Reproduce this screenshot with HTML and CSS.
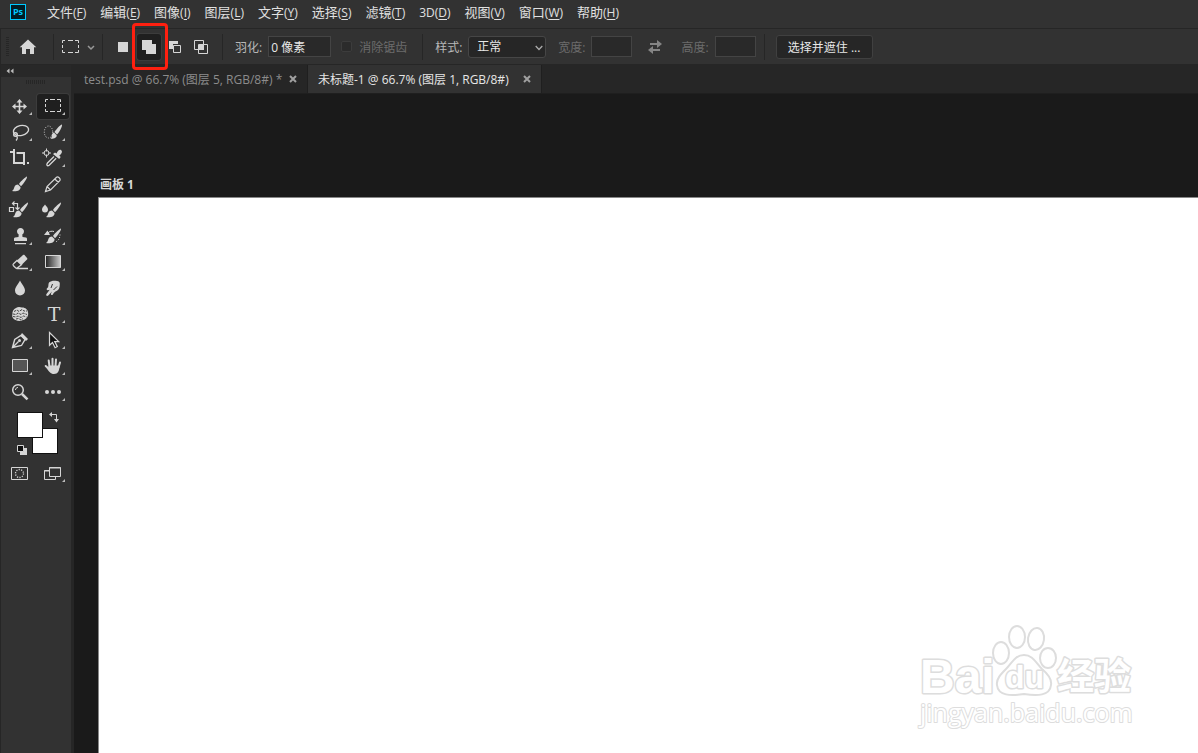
FILE: index.html
```html
<!DOCTYPE html>
<html lang="zh-CN">
<head>
    <meta charset="UTF-8">
    <meta name="viewport" content="width=device-width, initial-scale=1.0">
    <title>未标题-1 @ 66.7%</title>
    <link rel="stylesheet" href="styles.css">
</head>
<body>
    <nav class="menu-bar">
        <svg class="app-logo" width="16" height="16" viewBox="0 0 16 16">
            <rect x="0.5" y="0.5" width="15" height="15" fill="#001d26" stroke="#00c8ff"/>
            <text x="8" y="11" text-anchor="middle">Ps</text>
        </svg>
        <button>文件<small>(<u>F</u>)</small></button>
        <button>编辑<small>(<u>E</u>)</small></button>
        <button>图像<small>(<u>I</u>)</small></button>
        <button>图层<small>(<u>L</u>)</small></button>
        <button>文字<small>(<u>Y</u>)</small></button>
        <button>选择<small>(<u>S</u>)</small></button>
        <button>滤镜<small>(<u>T</u>)</small></button>
        <button><small>3D(<u>D</u>)</small></button>
        <button>视图<small>(<u>V</u>)</small></button>
        <button>窗口<small>(<u>W</u>)</small></button>
        <button>帮助<small>(<u>H</u>)</small></button>
    </nav>

    <div class="options-bar">
        <span class="grip"></span>
        <button class="home" aria-label="主页">
            <svg width="18" height="16" viewBox="0 0 18 16"><path fill="#d6d6d6" d="M9 0.5 17.3 8.3H15V15h-4v-5H7v5H3V8.3H0.7z"/></svg>
        </button>
        <span class="divider"></span>
        <button class="preset" aria-label="矩形选框">
            <svg width="34" height="16" viewBox="0 0 34 16" fill="none">
                <path stroke="#d6d6d6" d="M0.5 4V1.5H3M6 1.5h5M13 1.5h3.5V4M16.5 6v3M16.5 11v2.5H13M11 13.500h-5M3 13.5H0.500V11M0.500 9V6"/>
                <path stroke="#999" stroke-width="1.500" d="M26 7l3 3 3-3"/>
            </svg>
        </button>
        <span class="divider"></span>
        <div class="modes">
            <button aria-label="新选区">
                <svg width="16" height="16" viewBox="0 0 16 16"><path fill="#d6d6d6" d="M3 3h10v10H3z"/></svg>
            </button>
            <button class="active" aria-label="添加到选区">
                <svg width="16" height="16" viewBox="0 0 16 16"><path fill="#d6d6d6" d="M1 1h10v4h4v10H5v-4H1z"/></svg>
                <span class="callout"></span>
            </button>
            <button aria-label="从选区减去">
                <svg width="16" height="16" viewBox="0 0 16 16"><path fill="#d6d6d6" d="M2 2h9v3H6v5H2z"/><path fill="none" stroke="#d6d6d6" d="M6.500 6.500h7v7h-7z"/></svg>
            </button>
            <button aria-label="与选区交叉">
                <svg width="16" height="16" viewBox="0 0 16 16"><path fill="#d6d6d6" d="M6 6h5v5H6z"/><path fill="none" stroke="#d6d6d6" d="M1.500 1.500h9v9h-9zM5.500 5.500h9v9h-9z"/></svg>
            </button>
        </div>
        <span class="divider"></span>
        <label for="feather">羽化:</label>
        <input type="text" id="feather" class="feather" value="0 像素">
        <label class="check disabled"><input type="checkbox" disabled>消除锯齿</label>
        <span class="divider"></span>
        <label for="style">样式:</label>
        <div class="select">
            <select id="style"><option>正常</option></select>
            <svg width="8" height="6" viewBox="0 0 8 6"><path fill="none" stroke="#aaa" stroke-width="1.300" d="M0.700 1 4 4.500 7.300 1"/></svg>
        </div>
        <label class="disabled" for="width">宽度:</label>
        <input type="text" id="width" class="size" disabled>
        <button class="swap" aria-label="交换宽度和高度">
            <svg width="16" height="14" viewBox="0 0 16 14" fill="#858585"><path d="M3 3h7V0l5 4-5 4V5H3zM13 9H6V6L1 10l5 4v-3h7z"/></svg>
        </button>
        <label class="disabled" for="height">高度:</label>
        <input type="text" id="height" class="size" disabled>
        <span class="divider last"></span>
        <button class="select-mask">选择并遮住 ...</button>
    </div>

    <div class="workspace">
        <aside class="tool-panel">
            <button class="collapse" aria-label="折叠">
                <svg width="8" height="6" viewBox="0 0 8 6" fill="#bbb"><path d="M3.500 0.500v5L0.500 3zM7.500 0.500v5L4.500 3z"/></svg>
            </button>
            <span class="panel-grip"></span>
            <div class="tools">
                <button class="more" aria-label="移动">
                    <svg viewBox="0 0 32 25"><path fill="#d6d6d6" d="M15.500 5l3 3.500h-2.200v3.200h3.200V9.500l3.500 3-3.500 3v-2.200h-3.200v3.200h2.200l-3 3.500-3-3.500h2.200v-3.200h-3.200v2.200l-3.500-3 3.500-3v2.200h3.200V8.500h-2.200z"/></svg>
                </button>
                <button class="more active" aria-label="矩形选框">
                    <svg viewBox="0 0 32 25"><path fill="none" stroke="#d6d6d6" d="M8.500 8V5.500H11M13 5.500h5M20 5.500h3.500V8M23.500 10v3M23.500 15v2.500H20M18 17.500h-5M11 17.500H8.500V15M8.500 13v-3"/></svg>
                </button>
                <button class="more" aria-label="套索">
                    <svg viewBox="0 0 32 25" fill="none" stroke="#d6d6d6" stroke-width="1.400"><ellipse cx="17" cy="10.500" rx="7.700" ry="5" transform="rotate(-12 17 10.500)"/><circle cx="11.500" cy="14.500" r="1.800"/><path d="M12.500 16c1.500 1.500.5 3.500-.5 4.500"/></svg>
                </button>
                <button class="more" aria-label="快速选择">
                    <svg viewBox="0 0 32 25"><ellipse cx="11.500" cy="12" rx="4.200" ry="6" fill="none" stroke="#d6d6d6" stroke-dasharray="1 1.500"/><path fill="#d6d6d6" d="M25 4.500c.6 1.800-2.500 7.500-5 10l-2.500-2.500c2-3 5.500-7 7.500-7.500zM17 12.500l2.700 2.700c.3 2.500-2.700 3.800-6.200 3.500 1.500-1.200 1-2.700 1.500-4.200.3-1 1-1.700 2-2z"/></svg>
                </button>
                <button aria-label="裁剪">
                    <svg viewBox="0 0 32 25"><path fill="none" stroke="#d6d6d6" stroke-width="2" d="M10 3V17h11M12.500 7H20v12M6 6h3M23 17h2"/></svg>
                </button>
                <button class="more" aria-label="吸管">
                    <svg viewBox="0 0 32 25"><path fill="none" stroke="#d6d6d6" d="M9.500 2.500v3M9.500 8.500v3M5 7h3M11 7h3"/><circle cx="9.500" cy="7" r="2.500" fill="none" stroke="#d6d6d6"/><path fill="#d6d6d6" d="M16 8l2-1.500 1.500 1c1.200-2.500 3-4.500 4.700-3.300 1.600 1.300.5 3.800-2 5.300l1.500 1.500-1.500 2z"/><path fill="none" stroke="#d6d6d6" stroke-width="1.300" d="M17 10.500l-6.500 6.500c-1.500 2-.3 3.500 1.700 2.300l7-7"/></svg>
                </button>
                <button aria-label="画笔">
                    <svg viewBox="0 0 32 25"><path fill="#d6d6d6" d="M23 4.500c.5 1.700-3.500 7.300-6 9.700L15 12c2-3 6.500-7.200 8-7.500zM14 12.500l2.500 2.500c.5 3.300-4 5-8.500 4 2-1 1.700-2.500 2.500-4.200.7-1.500 2-2.300 3.500-2.300z"/></svg>
                </button>
                <button aria-label="铅笔">
                    <svg viewBox="0 0 32 25" fill="none" stroke="#d6d6d6" stroke-width="1.200"><path d="M8.500 19.500l1.500-5L19.500 5.200c1.500-1 4.500 1.500 3.500 3.300L13.500 18zM10 14.500l3.500 3.500M17.800 7l3.700 3.500"/></svg>
                </button>
                <button aria-label="颜色替换">
                    <svg viewBox="0 0 32 25"><path fill="none" stroke="#d6d6d6" stroke-width="1.200" d="M5.500 9.500h4v4h-4zM8.500 5.500h5V11M10.500 3.500l-2 2 2 2M11.500 9.500l2 2 2-2"/><path fill="#d6d6d6" d="M24 4.500c.5 1.700-3.500 7.300-6 9.700L16 12c2-3 6.500-7.200 8-7.500zM15 12.500l2.500 2.500c.5 3.300-4 5-8.500 4 2-1 1.700-2.500 2.500-4.200.7-1.500 2-2.300 3.500-2.300z"/></svg>
                </button>
                <button aria-label="混合器画笔">
                    <svg viewBox="0 0 32 25"><path fill="#d6d6d6" d="M8 6.500c1.500 2 3 3.300 3 5a3 3 0 01-6 0c0-1.700 1.500-3 3-5zM24 4.500c.5 1.700-3.500 7.300-6 9.700L16 12c2-3 6.500-7.200 8-7.500zM15 12.500l2.500 2.500c.5 3.300-4 5-8.500 4 2-1 1.700-2.500 2.500-4.200.7-1.500 2-2.300 3.500-2.300z"/></svg>
                </button>
                <button class="more" aria-label="仿制图章">
                    <svg viewBox="0 0 32 25"><path fill="#d6d6d6" d="M14.500 13l.2-2.500a3.500 3.500 0 113.600 0l.2 2.500 3.500.5c.7.2 1 .8 1 1.500v2H10v-2c0-.7.3-1.300 1-1.500zM11 19h11v1.200H11z"/></svg>
                </button>
                <button class="more" aria-label="历史记录画笔">
                    <svg viewBox="0 0 32 25"><path fill="#d6d6d6" d="M24 4.500c.5 1.700-3.500 7.300-6 9.700L16 12c2-3 6.500-7.200 8-7.500zM15 12.500l2.500 2.500c.5 3.300-4 5-8.500 4 2-1 1.700-2.500 2.500-4.200.7-1.500 2-2.300 3.500-2.300zM7 11l3.500-4.500L13 11z"/><path fill="none" stroke="#d6d6d6" d="M11 9c1.500-2 4-2 6-1.500"/><path fill="none" stroke="#d6d6d6" stroke-dasharray="1 1.500" d="M23 10.500c0 3-1 6-4.500 7.500"/></svg>
                </button>
                <button class="more" aria-label="橡皮擦">
                    <svg viewBox="0 0 32 25"><path fill="#d6d6d6" d="M13 10.500l6-5.500c.6-.5 1-.5 1.500 0L23 8c.5.6.5 1 0 1.500L17.500 15z"/><path fill="none" stroke="#d6d6d6" stroke-width="1.300" d="M13 10.500l-3.500 3.300c-.8.700-.7 1.200 0 2l2 2c.6.600 1.200.7 2 0l4-3zM12.500 18.500H24"/></svg>
                </button>
                <button class="more" aria-label="渐变">
                    <svg viewBox="0 0 32 25"><defs><linearGradient id="fade"><stop offset="0" stop-color="#222"/><stop offset="1" stop-color="#ccc"/></linearGradient></defs><path fill="url(#fade)" stroke="#d6d6d6" d="M8.500 5.500h15v12h-15z"/></svg>
                </button>
                <button aria-label="模糊">
                    <svg viewBox="0 0 32 25"><path fill="#d6d6d6" d="M16 4.500c1.500 3.500 5 6.500 5 10a5 5 0 01-10 0c0-3.500 3.500-6.500 5-10z"/></svg>
                </button>
                <button aria-label="涂抹">
                    <svg viewBox="0 0 32 25"><path fill="#d6d6d6" d="M12 6.500c2-2 5.500-2 8-1.500 2 .2 3 1.200 2.800 3 0 3.500-.8 6-3.300 7-1.500.8-2.500 1.500-3.500 3.200-.8 1.500-2.500.8-2-.7l1-2-3.700 4c-1.300 1-2.800 0-1.800-1.500l3.200-4.200-1.700.5c-1.500.2-1.800-1.500-.6-2.200 1.500-1.300.6-4 1.600-5.600z"/><path fill="none" stroke="#323232" d="M15.500 8l-1.500 4M20 10.500l-3.500 3.500"/></svg>
                </button>
                <button aria-label="海绵">
                    <svg viewBox="0 0 32 25"><path fill="#d6d6d6" d="M12 6c2-1.500 4.500-.8 6-.5 3-.2 6 2 6 5 1 3-1.500 7-5 7.500-2.500 1.500-5.500 1-7.500 0-2.500-1-4-3.500-3-6-.5-2.500 1-5 3.500-6z"/><path fill="none" stroke="#323232" stroke-width="0.900" stroke-dasharray="2.500 1" d="M10 9.500l3-1.500 2 1.500 3-2 2 1.500 3 0M9 12l3 .5 2-1.500 3 1.500 2-1.500 4 1.500M9 14.500l3 .500 2-1 3 1.500 2.500-1.500 3 1M12 17l2.500-.5 2.500 1.500 2-1.500"/></svg>
                </button>
                <button class="more type-tool" aria-label="文字">T</button>
                <button class="more" aria-label="钢笔">
                    <svg viewBox="0 0 32 25"><path fill="none" stroke="#d6d6d6" stroke-width="1.400" d="M8.500 19.500l2.200-8 6.300-4 4 4-3.500 6zM9 19l5.500-5.500"/><circle cx="15.500" cy="12.500" r="1.500" fill="#d6d6d6"/><path fill="#d6d6d6" d="M18 5l6 6-2 2-5.500-5.500z"/></svg>
                </button>
                <button class="more" aria-label="路径选择">
                    <svg viewBox="0 0 32 25"><path fill="#111" stroke="#d6d6d6" stroke-width="1.200" d="M12.500 4.500v12.800l3-2.800 2.600 5.200 2.200-1.100-2.600-5h4z"/></svg>
                </button>
                <button class="more" aria-label="矩形">
                    <svg viewBox="0 0 32 25"><path fill="#555" stroke="#d6d6d6" d="M8.500 5.500h15v12h-15z"/></svg>
                </button>
                <button class="more" aria-label="抓手">
                    <svg viewBox="0 0 32 25"><path fill="none" stroke="#d6d6d6" stroke-width="2" stroke-linecap="round" d="M12.500 12.500l-.8-6M15.500 12V4.700M18.500 12l.5-6.500M21.500 13.500l1.500-5M12 15l-3.300-3"/><path fill="#d6d6d6" d="M11.500 11.500h11c0 5-1.500 8.500-5.500 8.500-3.500 0-5-2.500-7.500-6l2 .5z"/></svg>
                </button>
                <button aria-label="缩放">
                    <svg viewBox="0 0 32 25" fill="none" stroke="#d6d6d6"><circle cx="14" cy="10" r="5.300" stroke-width="1.500"/><path stroke-width="2.500" d="M18 14l5.500 5.300"/><path d="M11.500 10c0-1.500 1-2.500 2.500-2.500"/></svg>
                </button>
                <button class="more" aria-label="编辑工具栏">
                    <svg viewBox="0 0 32 25" fill="#d6d6d6"><circle cx="10" cy="12" r="2"/><circle cx="16" cy="12" r="2"/><circle cx="22" cy="12" r="2"/></svg>
                </button>
            </div>
            <div class="swatches">
                <button class="swatch background" aria-label="背景色"></button>
                <button class="swatch foreground" aria-label="前景色"></button>
                <button class="swap-colors" aria-label="切换颜色">
                    <svg width="11" height="11" viewBox="0 0 11 11"><path fill="none" stroke="#d6d6d6" d="M2 2.500h5.500V8"/><path fill="#d6d6d6" d="M0 2.500 3 0v5zM5 7h5l-2.500 3.500z"/></svg>
                </button>
                <button class="default-colors" aria-label="默认颜色">
                    <svg width="10" height="10" viewBox="0 0 10 10"><path fill="#d6d6d6" d="M3 3h7v7H3z"/><path fill="#111" stroke="#d6d6d6" d="M0.500 0.500h6v6h-6z"/></svg>
                </button>
            </div>
            <div class="tools view-modes">
                <button aria-label="快速蒙版">
                    <svg viewBox="0 0 32 25" fill="none" stroke="#d6d6d6"><path d="M7.500 6.500h16v12h-16z"/><circle cx="15.500" cy="12.500" r="4" stroke-width="1.300" stroke-dasharray="1.200 1.300"/></svg>
                </button>
                <button class="more" aria-label="屏幕模式">
                    <svg viewBox="0 0 32 25" fill="#323232" stroke="#d6d6d6"><path d="M7.500 9.500h11v9h-11z"/><path d="M12.500 6.500h11v9h-11z"/><path d="M7 10h5M12 7h12"/></svg>
                </button>
            </div>
        </aside>

        <main class="documents">
            <div class="tabs">
                <div class="tab">test.psd @ 66.7% (图层 5, RGB/8#) *
                    <button aria-label="关闭"><svg width="8" height="8" viewBox="0 0 8 8"><path stroke="currentColor" stroke-width="2" d="M1 1l6 6M7 1 1 7"/></svg></button>
                </div>
                <div class="tab current">未标题-1 @ 66.7% (图层 1, RGB/8#)
                    <button aria-label="关闭"><svg width="8" height="8" viewBox="0 0 8 8"><path stroke="currentColor" stroke-width="2" d="M1 1l6 6M7 1 1 7"/></svg></button>
                </div>
            </div>
            <div class="canvas">
                <div class="artboard-name">画板 1</div>
                <div class="artboard">
                    <svg class="watermark" width="224" height="116" viewBox="0 0 224 116">
                        <g fill="#fff" stroke="#ddd" stroke-width="2">
                            <ellipse cx="85" cy="36" rx="8" ry="11"/>
                            <ellipse cx="101" cy="20" rx="8" ry="11"/>
                            <ellipse cx="120" cy="22" rx="8" ry="11" transform="rotate(8 120 22)"/>
                            <ellipse cx="132" cy="41" rx="8" ry="10"/>
                            <path d="M108 38c9 0 12 8 18 14 6 5 10 10 9 16-1 11-14 11-27 9-13 2-26 2-27-9-1-6 4-11 9-16 6-6 9-14 18-14z"/>
                        </g>
                        <text class="mark-name" x="4" y="76">Bai</text>
                        <text class="mark-du" x="89" y="71">du</text>
                        <text class="mark-cjk" x="141" y="73">经验</text>
                        <text class="mark-url" x="4" y="105">jingyan.baidu.com</text>
                    </svg>
                </div>
            </div>
        </main>
    </div>
</body>
</html>
```

FILE: styles.css
```css
* {
    margin: 0;
    padding: 0;
    box-sizing: border-box;
}

body {
    height: 100vh;
    display: flex;
    flex-direction: column;
    overflow: hidden;
    background: #1a1a1a;
    color: #e0e0e0;
    font-family: "Open Sans", "Noto Sans CJK SC", sans-serif;
    font-size: 12px;
}

button {
    background: none;
    border: none;
    color: inherit;
    font: inherit;
}

svg {
    display: block;
}

/* menu */
.menu-bar {
    height: 29px;
    flex: none;
    display: flex;
    align-items: center;
    gap: 14px;
    padding: 0 10px 4px;
    background: #323232;
    border-bottom: 1px solid #262626;
}

.menu-bar button {
    font-size: 13px;
    line-height: 20px;
    white-space: nowrap;
}

.menu-bar small {
    font-size: 12px;
}

.menu-bar u {
    text-underline-offset: 2px;
}

.app-logo {
    margin-right: 7px;
}

.app-logo text {
    fill: #00c8ff;
    font-size: 9px;
    font-weight: bold;
}

/* options */
.options-bar {
    height: 36px;
    flex: none;
    display: flex;
    align-items: center;
    padding-left: 5px;
    background: #323232;
    border-bottom: 1px solid #262626;
    border-left: 1px solid #262626;
    color: #b8b8b8;
    white-space: nowrap;
}

.grip {
    width: 3px;
    height: 20px;
    margin-right: 10px;
    background: repeating-linear-gradient(#262626 0 1px, #323232 1px 2px);
}

.divider {
    width: 1px;
    height: 26px;
    background: #262626;
}

.home {
    margin-right: 16px;
}

.preset {
    margin: 0 6px 0 8px;
}

.modes {
    display: flex;
    gap: 2px;
    margin: 0 9px 0 8px;
}

.modes button {
    position: relative;
    width: 24px;
    height: 26px;
    padding: 4px;
    border-radius: 3px;
}

.modes .active,
.tools .active {
    background: #1f1f1f;
    box-shadow: 0 0 0 1px #3c3c3c;
}

.callout {
    position: absolute;
    inset: -11px -7px -10px -5px;
    z-index: 1;
    border: 3px solid #ff2010;
    border-radius: 4px;
    pointer-events: none;
}

.options-bar label {
    margin: 0 6px 0 12px;
}

.options-bar label.disabled {
    color: #6c6c6c;
}

.options-bar input[type="text"] {
    height: 21px;
    padding: 0 2px;
    background: #292929;
    border: 1px solid #444;
    color: #e8e8e8;
    font: inherit;
}

.options-bar .feather {
    width: 63px;
}

.options-bar .size {
    width: 41px;
}

.options-bar .check {
    display: flex;
    align-items: center;
    gap: 7px;
    margin: 0 15px 0 10px;
}

.check input {
    appearance: none;
    width: 11px;
    height: 11px;
    background: #2b2b2b;
    border: 1px solid #3c3c3c;
    border-radius: 2px;
}

.select {
    position: relative;
}

.select select {
    appearance: none;
    width: 78px;
    height: 22px;
    padding-left: 8px;
    background: #262626;
    border: 1px solid #464646;
    border-radius: 3px;
    color: #e8e8e8;
    font: inherit;
}

.select svg {
    position: absolute;
    right: 3px;
    top: 9px;
    pointer-events: none;
}

.swap {
    margin: 0 6px 0 15px;
}

.last {
    margin: 0 11px 0 8px;
}

.select-mask {
    width: 97px;
    height: 24px;
    background: #262626;
    border: 1px solid #404040;
    border-radius: 3px;
    color: #e8e8e8;
}

/* workspace */
.workspace {
    flex: 1;
    display: flex;
    min-height: 0;
}

.tool-panel {
    width: 74px;
    flex: none;
    background: #323232;
    border-left: 1px solid #262626;
    border-right: 3px solid #262626;
}

.collapse {
    display: block;
    width: 100%;
    height: 12px;
    padding-left: 5px;
    background: #282828;
}

.panel-grip {
    display: block;
    width: 20px;
    height: 4px;
    margin: 3px 0 10px 25px;
    background: repeating-linear-gradient(90deg, #262626 0 1px, #323232 1px 2px);
}

.tools {
    display: grid;
    grid-template-columns: 32px 32px;
    grid-auto-rows: 25px;
    gap: 1px;
    padding-left: 3px;
}

.tools button {
    position: relative;
    border-radius: 3px;
}

.tools svg {
    width: 32px;
    height: 25px;
}

.more::after {
    content: "";
    position: absolute;
    right: 4px;
    bottom: 4px;
    width: 3px;
    height: 3px;
    background: #bbb;
    clip-path: polygon(100% 0, 100% 100%, 0 100%);
}

.tools .type-tool {
    padding-left: 2px;
    color: #d6d6d6;
    font: 19px/25px "DejaVu Serif", serif;
}

.swatches {
    position: relative;
    height: 50px;
    margin-top: 6px;
}

.swatches button {
    position: absolute;
}

.swatches .swatch {
    width: 26px;
    height: 26px;
    background: #fff;
    border: 1px solid #111;
}

.swatches .foreground {
    left: 16px;
    top: 1px;
}

.swatches .background {
    left: 31px;
    top: 17px;
}

.swap-colors {
    left: 48px;
    top: 1px;
}

.default-colors {
    left: 16px;
    top: 34px;
}

/* documents */
.documents {
    flex: 1;
    min-width: 0;
    display: flex;
    flex-direction: column;
}

.tabs {
    height: 29px;
    flex: none;
    display: flex;
    background: #262626;
    border-bottom: 1px solid #1f1f1f;
}

.tab {
    width: 234px;
    display: flex;
    align-items: center;
    justify-content: space-between;
    padding: 0 10px;
    border-right: 1px solid #1f1f1f;
    color: #8c8c8c;
    white-space: nowrap;
}

.tab.current {
    background: #323232;
    color: #e6e6e6;
}

.tab button {
    color: #a0a0a0;
}

.canvas {
    flex: 1;
    display: flex;
    flex-direction: column;
    padding: 83px 0 0 24px;
}

.artboard-name {
    padding-left: 2px;
    color: #d8d8d8;
    font-weight: bold;
    line-height: 16px;
    margin-bottom: 4px;
}

.artboard {
    position: relative;
    flex: 1;
    background: #fff;
    border-top: 1px solid #888;
    border-left: 1px solid #888;
}

.watermark {
    position: absolute;
    right: 58px;
    bottom: 20px;
}

.watermark text {
    fill: #fff;
    stroke: #ddd;
    stroke-width: 3px;
    stroke-linejoin: round;
    paint-order: stroke;
    font-family: "Liberation Sans", "Noto Sans CJK SC", sans-serif;
    font-weight: bold;
}

.watermark .mark-name {
    font-size: 48px;
}

.watermark .mark-du {
    font-size: 32px;
}

.watermark .mark-cjk {
    font-size: 37px;
}

.watermark .mark-url {
    stroke-width: 2px;
    font-family: "Open Sans", sans-serif;
    font-size: 25px;
    font-weight: normal;
}
```
